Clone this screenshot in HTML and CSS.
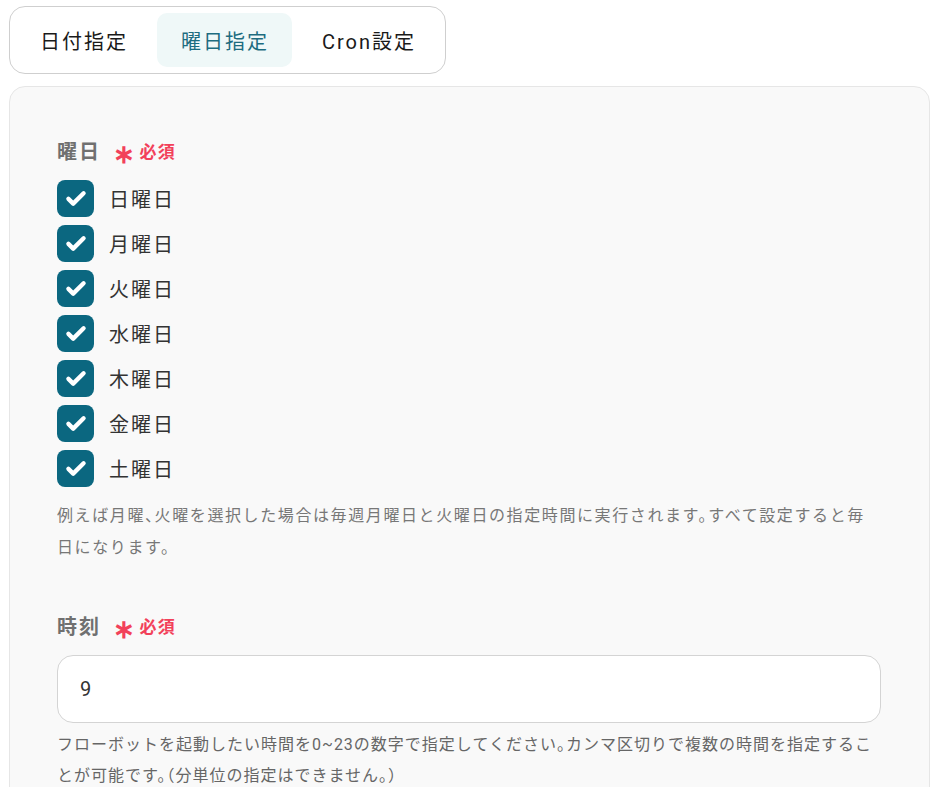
FILE: index.html
```html
<!DOCTYPE html>
<html lang="ja">
<head>
<meta charset="utf-8">
<title>曜日指定</title>
<link rel="stylesheet" href="styles.css">
</head>
<body>
<div class="tabs">
  <div class="tab">日付指定</div>
  <div class="tab active">曜日指定</div>
  <div class="tab">Cron設定</div>
</div>
<div class="panel">
  <div class="field">
    <div class="label">曜日<span class="req"><span class="ast">∗</span>必須</span></div>
    <div class="checks">
      <label class="check"><span class="box"><svg viewBox="0 0 24 24" width="26" height="26"><path d="M5 12.8l4.4 4.4L19 7.6" fill="none" stroke="#fff" stroke-width="4" stroke-linecap="round" stroke-linejoin="round"/></svg></span>日曜日</label>
      <label class="check"><span class="box"><svg viewBox="0 0 24 24" width="26" height="26"><path d="M5 12.8l4.4 4.4L19 7.6" fill="none" stroke="#fff" stroke-width="4" stroke-linecap="round" stroke-linejoin="round"/></svg></span>月曜日</label>
      <label class="check"><span class="box"><svg viewBox="0 0 24 24" width="26" height="26"><path d="M5 12.8l4.4 4.4L19 7.6" fill="none" stroke="#fff" stroke-width="4" stroke-linecap="round" stroke-linejoin="round"/></svg></span>火曜日</label>
      <label class="check"><span class="box"><svg viewBox="0 0 24 24" width="26" height="26"><path d="M5 12.8l4.4 4.4L19 7.6" fill="none" stroke="#fff" stroke-width="4" stroke-linecap="round" stroke-linejoin="round"/></svg></span>水曜日</label>
      <label class="check"><span class="box"><svg viewBox="0 0 24 24" width="26" height="26"><path d="M5 12.8l4.4 4.4L19 7.6" fill="none" stroke="#fff" stroke-width="4" stroke-linecap="round" stroke-linejoin="round"/></svg></span>木曜日</label>
      <label class="check"><span class="box"><svg viewBox="0 0 24 24" width="26" height="26"><path d="M5 12.8l4.4 4.4L19 7.6" fill="none" stroke="#fff" stroke-width="4" stroke-linecap="round" stroke-linejoin="round"/></svg></span>金曜日</label>
      <label class="check"><span class="box"><svg viewBox="0 0 24 24" width="26" height="26"><path d="M5 12.8l4.4 4.4L19 7.6" fill="none" stroke="#fff" stroke-width="4" stroke-linecap="round" stroke-linejoin="round"/></svg></span>土曜日</label>
    </div>
    <p class="help">例えば月曜、火曜を選択した場合は毎週月曜日と火曜日の指定時間に実行されます。すべて設定すると毎日になります。</p>
  </div>
  <div class="field field2">
    <div class="label">時刻<span class="req"><span class="ast">∗</span>必須</span></div>
    <div class="input">9</div>
    <p class="help help2">フローボットを起動したい時間を0~23の数字で指定してください。カンマ区切りで複数の時間を指定することが可能です。（分単位の指定はできません。）</p>
  </div>
</div>
</body>
</html>
```
FILE: styles.css
```css
html, body {
  margin: 0;
  background: #fff;
}
body {
  padding: 6px 7px 0 9px;
  font-family: "Roboto", "Noto Sans CJK JP", sans-serif;
  color: #1a1a1a;
}
.tabs {
  display: inline-flex;
  gap: 6px;
  padding: 6px;
  border: 1px solid #cfcfcf;
  border-radius: 16px;
  background: #fff;
}
.tab {
  height: 54px;
  padding: 0 23px 0 24px;
  min-width: 88px;
  display: flex;
  align-items: center;
  justify-content: center;
  font-size: 20px;
  letter-spacing: 0.1em;
  border-radius: 10px;
  color: #1a1a1a;
}
.tab.active {
  background: #eff8f8;
  color: #1d6c80;
}
.panel {
  margin-top: 12px;
  background: #f9f9f9;
  border: 1px solid #e6e6e6;
  border-radius: 16px;
  padding: 50px 48px 40px 47px;
}
.label {
  font-size: 20px;
  font-weight: 700;
  color: #707070;
  letter-spacing: 0.1em;
  line-height: 30px;
  display: flex;
  align-items: center;
}
.req {
  margin-left: 12px;
  color: #f2415a;
  font-size: 17px;
  font-weight: 700;
  letter-spacing: 0.08em;
  display: flex;
  align-items: center;
}
.ast {
  font-size: 26px;
  font-weight: 700;
  margin-right: 3px;
  line-height: 20px;
  position: relative;
  top: 2px;
}
.checks {
  margin-top: 13px;
  display: flex;
  flex-direction: column;
  gap: 9px;
}
.check {
  display: flex;
  align-items: center;
  gap: 15px;
  font-size: 20px;
  letter-spacing: 0.1em;
  color: #333;
  height: 36px;
}
.box {
  width: 37px;
  height: 37px;
  border-radius: 8px;
  background: #0b6780;
  display: flex;
  align-items: center;
  justify-content: center;
  flex: none;
}
.help {
  margin: 14px 0 0;
  font-size: 16px;
  line-height: 32px;
  letter-spacing: 0.1em;
  color: #777;
  font-feature-settings: "halt";
}
.field2 {
  margin-top: 48px;
}
.input {
  margin-top: 13px;
  height: 68px;
  box-sizing: border-box;
  background: #fff;
  border: 1px solid #d4d4d4;
  border-radius: 16px;
  padding: 0 22px;
  display: flex;
  align-items: center;
  font-size: 20px;
  color: #333;
}
.help2 {
  margin-top: 6px;
  line-height: 31px;
  letter-spacing: 1px;
  color: #666;
}
```
